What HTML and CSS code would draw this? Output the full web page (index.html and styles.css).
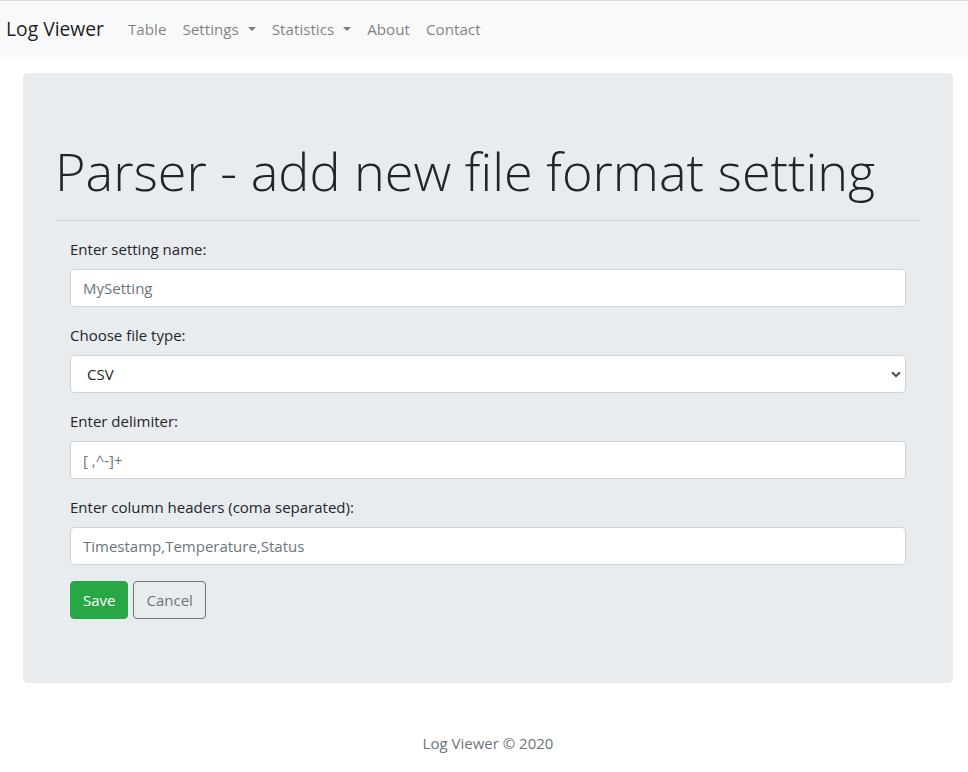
FILE: index.html
```html
<!DOCTYPE html>
<html lang="en">
<head>
<meta charset="utf-8">
<title>Log Viewer</title>
<link rel="stylesheet" href="styles.css">
</head>
<body>
<nav class="navbar">
  <a class="brand" href="#">Log Viewer</a>
  <ul class="nav">
    <li><a class="nav-link" href="#">Table</a></li>
    <li><a class="nav-link dropdown" href="#">Settings</a></li>
    <li><a class="nav-link dropdown" href="#">Statistics</a></li>
    <li><a class="nav-link" href="#">About</a></li>
    <li><a class="nav-link" href="#">Contact</a></li>
  </ul>
</nav>
<main class="container">
  <section class="jumbotron">
    <h1 class="display">Parser - add new file format setting</h1>
    <hr class="rule">
    <form class="form">
      <div class="form-group">
        <label class="label">Enter setting name:</label>
        <input class="control" type="text" placeholder="MySetting">
      </div>
      <div class="form-group">
        <label class="label">Choose file type:</label>
        <div class="select-wrap">
          <select class="control select">
            <option>CSV</option>
          </select>
          <svg class="chevron" width="10" height="7" viewBox="0 0 10 7"><path d="M1 1.2 L5 5 L9 1.2" fill="none" stroke="#495057" stroke-width="2"/></svg>
        </div>
      </div>
      <div class="form-group">
        <label class="label">Enter delimiter:</label>
        <input class="control" type="text" placeholder="[ ,^-]+">
      </div>
      <div class="form-group">
        <label class="label">Enter column headers (coma separated):</label>
        <input class="control" type="text" placeholder="Timestamp,Temperature,Status">
      </div>
      <div class="actions">
        <button class="btn btn-success" type="button">Save</button>
        <button class="btn btn-outline" type="button">Cancel</button>
      </div>
    </form>
  </section>
  <footer class="footer">Log Viewer © 2020</footer>
</main>
</body>
</html>
```
FILE: styles.css
```css
* { box-sizing: border-box; }
html, body { margin: 0; padding: 0; }
body {
  font-family: "Open Sans", "Noto Sans", Arial, sans-serif;
  font-size: 15px;
  line-height: 24px;
  color: #212529;
  background: #fff;
  border-top: 1px solid #dcdde0;
}
.navbar {
  display: flex;
  align-items: center;
  height: 56px;
  padding: 8px 6px;
  background: #f8f9fa;
}
.brand {
  font-size: 19.3px;
  line-height: 30px;
  color: rgba(0,0,0,.9);
  text-decoration: none;
  margin-right: 16px;
}
.nav {
  display: flex;
  list-style: none;
  margin: 0;
  padding: 0;
}
.nav-link {
  display: block;
  padding: 8px;
  font-size: 15.2px;
  color: rgba(0,0,0,.5);
  text-decoration: none;
  line-height: 24px;
}
.dropdown::after {
  content: "";
  display: inline-block;
  margin-left: 9px;
  vertical-align: 4px;
  border-top: 4.8px solid;
  border-right: 4.8px solid transparent;
  border-left: 4.8px solid transparent;
  border-bottom: 0;
}
.container {
  margin: 0 15px 0 23px;
}
.jumbotron {
  margin-top: 16px;
  background: #e9ecef;
  border-radius: 4.8px;
  padding: 64px 32px;
}
.display {
  margin: 0;
  font-size: 52.2px;
  font-weight: 300;
  line-height: 67px;
  white-space: nowrap;
}
.rule {
  margin: 16px 0;
  border: 0;
  border-top: 1px solid rgba(0,0,0,.1);
}
.form {
  padding: 0 15px;
}
.form-group {
  margin-bottom: 16px;
}
.label {
  display: inline-block;
  margin-bottom: 8px;
}
.control {
  display: block;
  width: 100%;
  height: 38px;
  padding: 6px 12px;
  font: inherit;
  line-height: 24px;
  color: #495057;
  background: #fff;
  border: 1px solid #ced4da;
  border-radius: 4px;
}
.control::placeholder { color: #6c757d; opacity: 1; }
.select-wrap { position: relative; }
.select {
  appearance: none;
  -webkit-appearance: none;
  padding-left: 16px;
  color: #212529;
}
.chevron {
  position: absolute;
  right: 5px;
  top: 16px;
  pointer-events: none;
}
.actions {
  display: flex;
  gap: 5px;
}
.btn {
  height: 38px;
  padding: 6px 12px;
  font: inherit;
  line-height: 24px;
  border-radius: 4px;
  border: 1px solid transparent;
  background: transparent;
}
.btn-success {
  color: #fff;
  background: #28a745;
  border-color: #28a745;
}
.btn-outline {
  color: #6c757d;
  border-color: #6c757d;
}
.footer {
  margin-top: 32px;
  padding-top: 16px;
  text-align: center;
  color: #6c757d;
}
```
